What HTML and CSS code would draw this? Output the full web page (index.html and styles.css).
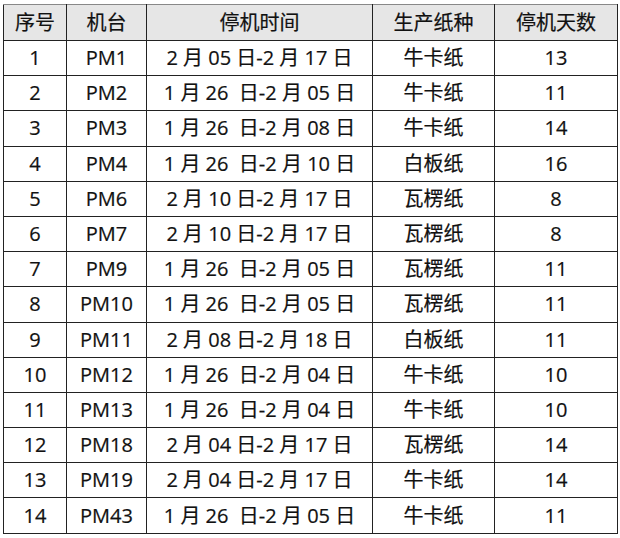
FILE: index.html
```html
<!DOCTYPE html>
<html lang="zh">
<head>
<meta charset="utf-8">
<link rel="stylesheet" href="styles.css">
</head>
<body>
<table class="stop-table">
  <colgroup>
    <col class="c-no"><col class="c-pm"><col class="c-time"><col class="c-kind"><col class="c-days">
  </colgroup>
  <thead>
    <tr><th>序号</th><th>机台</th><th>停机时间</th><th>生产纸种</th><th>停机天数</th></tr>
  </thead>
  <tbody>
    <tr><td>1</td><td>PM1</td><td class="date">2 月 05 日-2 月 17 日</td><td>牛卡纸</td><td>13</td></tr>
    <tr><td>2</td><td>PM2</td><td class="date">1 月 26  日-2 月 05 日</td><td>牛卡纸</td><td>11</td></tr>
    <tr><td>3</td><td>PM3</td><td class="date">1 月 26  日-2 月 08 日</td><td>牛卡纸</td><td>14</td></tr>
    <tr><td>4</td><td>PM4</td><td class="date">1 月 26  日-2 月 10 日</td><td>白板纸</td><td>16</td></tr>
    <tr><td>5</td><td>PM6</td><td class="date">2 月 10 日-2 月 17 日</td><td>瓦楞纸</td><td>8</td></tr>
    <tr><td>6</td><td>PM7</td><td class="date">2 月 10 日-2 月 17 日</td><td>瓦楞纸</td><td>8</td></tr>
    <tr><td>7</td><td>PM9</td><td class="date">1 月 26  日-2 月 05 日</td><td>瓦楞纸</td><td>11</td></tr>
    <tr><td>8</td><td>PM10</td><td class="date">1 月 26  日-2 月 05 日</td><td>瓦楞纸</td><td>11</td></tr>
    <tr><td>9</td><td>PM11</td><td class="date">2 月 08 日-2 月 18 日</td><td>白板纸</td><td>11</td></tr>
    <tr><td>10</td><td>PM12</td><td class="date">1 月 26  日-2 月 04 日</td><td>牛卡纸</td><td>10</td></tr>
    <tr><td>11</td><td>PM13</td><td class="date">1 月 26  日-2 月 04 日</td><td>牛卡纸</td><td>10</td></tr>
    <tr><td>12</td><td>PM18</td><td class="date">2 月 04 日-2 月 17 日</td><td>瓦楞纸</td><td>14</td></tr>
    <tr><td>13</td><td>PM19</td><td class="date">2 月 04 日-2 月 17 日</td><td>牛卡纸</td><td>14</td></tr>
    <tr><td>14</td><td>PM43</td><td class="date">1 月 26  日-2 月 05 日</td><td>牛卡纸</td><td>11</td></tr>
  </tbody>
</table>
</body>
</html>
```
FILE: styles.css
```css
html, body {
  margin: 0;
  background: #ffffff;
}
body {
  padding: 4px 0 0 3px;
  font-family: "Open Sans", "Noto Sans CJK SC", sans-serif;
  color: #111111;
}
.stop-table {
  border-collapse: collapse;
  table-layout: fixed;
  width: 614px;
  font-size: 20px;
}
.c-no { width: 63px; }
.c-pm { width: 80px; }
.c-time { width: 226px; }
.c-kind { width: 122px; }
.c-days { width: 123px; }
.stop-table th,
.stop-table td {
  border: 1px solid #222222;
  text-align: center;
  padding: 0;
  line-height: 1;
  white-space: pre;
  font-weight: 400;
  -webkit-text-stroke: 0.2px #111111;
}
.stop-table thead tr { height: 36px; }
.stop-table th {
  background: #e6e6e6;
  border-top-color: #888888;
}
.stop-table tbody tr { height: 35.2px; }
```
